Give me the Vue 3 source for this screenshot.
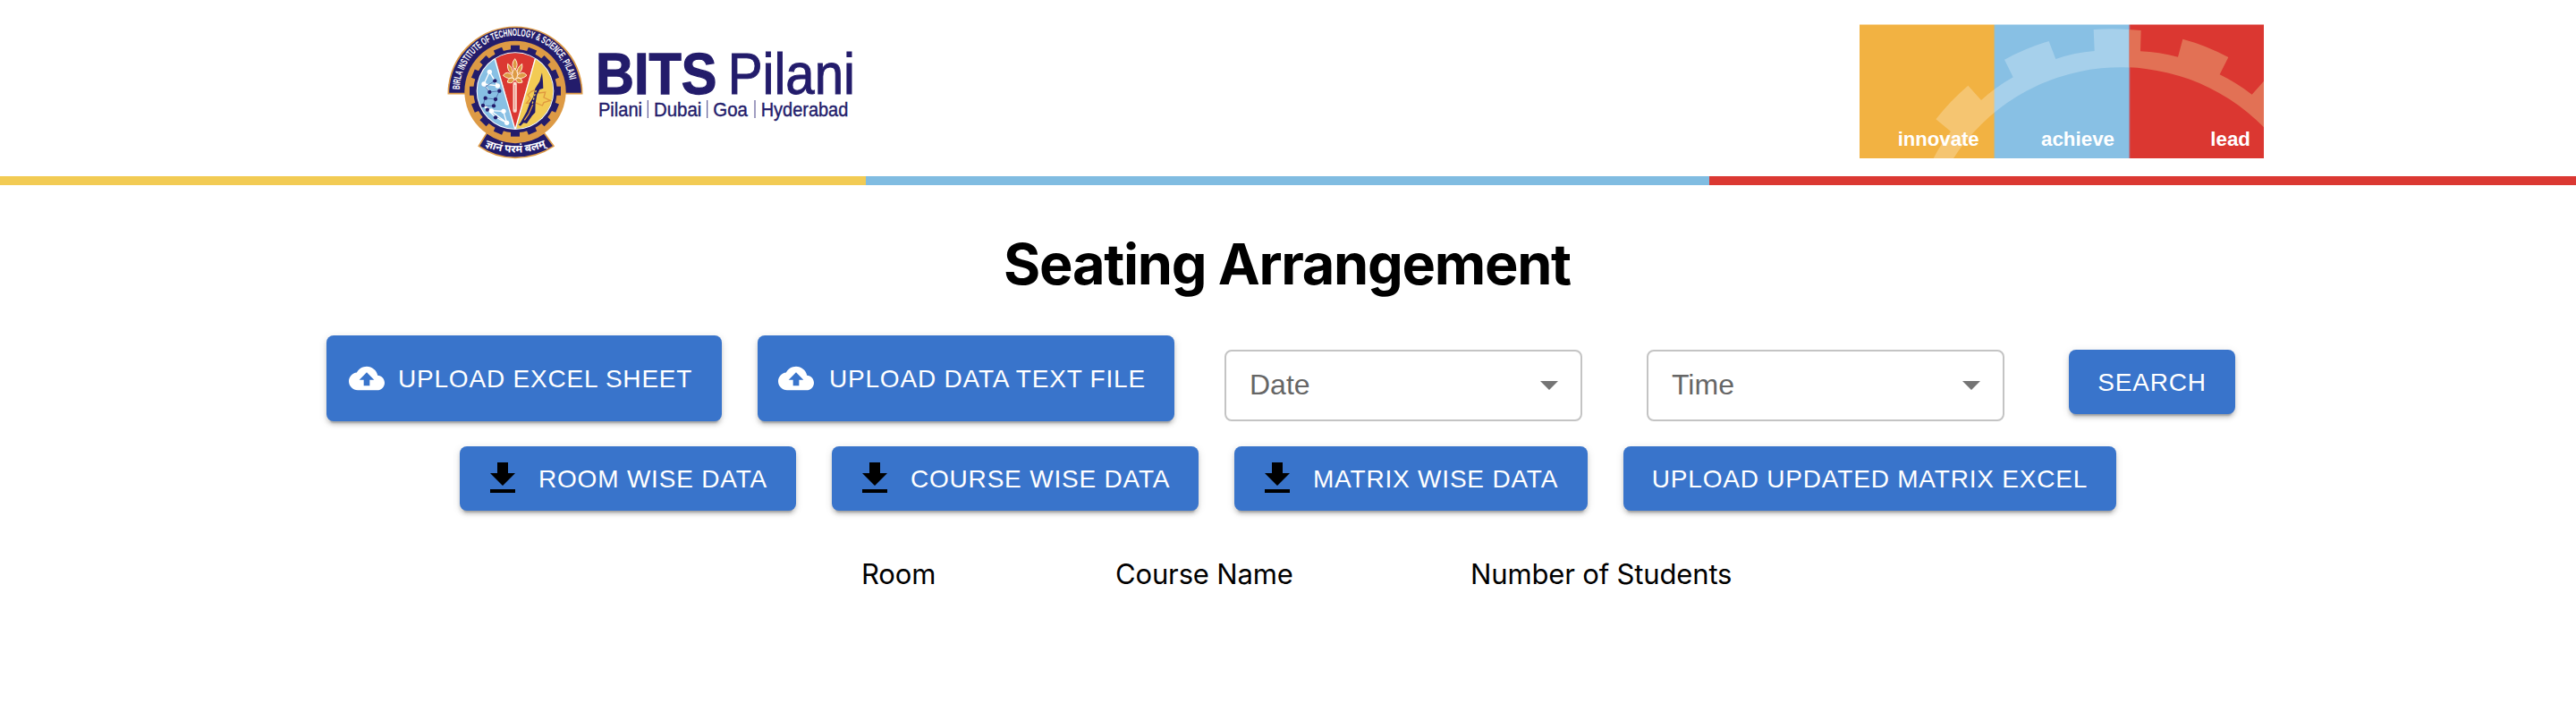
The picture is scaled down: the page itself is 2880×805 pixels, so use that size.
<script setup>
const teeth = Array.from({ length: 16 }, (_, i) => i * 22.5)
const cloud = 'M19.35 10.04C18.67 6.59 15.64 4 12 4 9.11 4 6.6 5.64 5.35 8.04 2.34 8.36 0 10.91 0 14c0 3.31 2.69 6 6 6h13c2.76 0 5-2.24 5-5 0-2.64-2.05-4.78-4.65-4.96zM14 13v4h-4v-4H7l5-5 5 5h-3z'
const download = 'M19 9h-4V3H9v6H5l7 7 7-7zM5 18v2h14v-2H5z'
const uploads = [
  { label: 'Upload Excel Sheet', cls: 'excel' },
  { label: 'Upload Data Text File', cls: 'text-file' },
]
const selects = ['Date', 'Time']
const downloads = [
  { label: 'Room wise data', cls: 'room' },
  { label: 'Course wise data', cls: 'course' },
  { label: 'Matrix wise data', cls: 'matrix' },
]
</script>

<template>
  <div class="page">
    <header class="header">
      <svg class="logo" viewBox="0 0 1440 525">
        <defs>
          <path id="motto-top" d="M71 262A187 187 0 0 1 445 262" />
          <path id="motto-bottom" d="M146 442Q258 492 372 442" />
          <clipPath id="disk"><circle cx="258" cy="260" r="127" /></clipPath>
        </defs>
        <path class="band" d="M34 269C34 258 34 252 36 240A224 224 0 0 1 480 240C482 252 482 258 482 269H424V262H92V269Z" />
        <circle cx="258" cy="262" r="170" class="orange" />
        <circle cx="258" cy="260" r="140" class="navy" />
        <rect v-for="a in teeth" :key="a" x="243" y="107" width="30" height="36" class="navy" :transform="`rotate(${a} 258 260)`" />
        <circle cx="258" cy="260" r="130" fill="#fff" />
        <g clip-path="url(#disk)">
          <rect x="120" y="120" width="280" height="280" fill="#88c0e4" />
          <path d="M258 400L332 120H420V400Z" fill="#f2cb54" />
          <path d="M258 390L184 120H332Z" fill="#db3832" />
          <path d="M184 134L258 390L328 142" fill="none" stroke="#fff" stroke-width="4" />
          <g fill="none" stroke="#fff" stroke-width="4">
            <path d="M172 196L153 237L199 243ZM172 196L190 226M153 237L172 263M218 328L176 326L230 367L192 348M218 328L230 367M192 348L152 310M176 326L156 308" />
          </g>
          <path d="M190 226L158 246L172 264L205 260L192 288L157 284L150 310L186 310L192 288" fill="none" stroke="#5a7bb5" stroke-width="3" />
          <g class="navy">
            <circle v-for="p in [[190,226],[172,264],[205,260],[158,284],[192,288],[150,309],[186,310],[165,323],[192,349]]" :key="p.join()" :cx="p[0]" :cy="p[1]" r="6.5" />
          </g>
          <g fill="#fff">
            <circle v-for="p in [[172,196],[153,237],[199,243],[219,328],[230,367],[178,327]]" :key="p.join()" :cx="p[0]" :cy="p[1]" r="8" />
          </g>
          <path d="M257 236V326" stroke="#f9ddd0" stroke-width="13" stroke-linecap="round" />
          <path d="M257 240V322" stroke="#e9867a" stroke-width="3" />
          <g fill="#dd9a45" stroke="#fff0d0" stroke-width="3">
            <path d="M257 152Q241 172 257 191Q272 172 257 152Z" />
            <path d="M233 169Q229 192 248 203Q254 184 233 169ZM281 169Q285 192 266 203Q260 184 281 169Z" />
            <path d="M217 208Q232 188 251 211Q238 226 217 208ZM297 208Q282 188 263 211Q276 226 297 208Z" />
            <path d="M257 184Q239 205 257 225Q275 205 257 184Z" />
            <path d="M232 231Q234 212 254 218Q253 239 232 231ZM282 231Q280 212 260 218Q261 239 282 231Z" />
          </g>
          <path d="M312 262L330 254L337 267L359 264L354 282L376 292L354 299L349 309L326 300L296 301L309 285L300 273Z" fill="none" stroke="#df983f" stroke-width="4" />
          <path d="M348 199L340 228L325 252L319 280L307 300L296 330L276 366L269 374L276 377L286 367L297 369L315 343L325 332L326 300L331 273L340 255L352 251L351 228Z" class="navy" />
          <path d="M328 258L321 283L315 305" fill="none" stroke="#f2cb54" stroke-width="4" stroke-dasharray="7 6" />
          <path d="M289 358L303 338L317 306" fill="none" stroke="#dd9a45" stroke-width="4" />
        </g>
        <path class="band" d="M163 401Q208 433 258 433Q312 433 355 401L387 445Q329 484 258 484Q191 484 136 445Z" />
        <text class="ring-text" textLength="542" lengthAdjust="spacingAndGlyphs"><textPath href="#motto-top" startOffset="6">BIRLA INSTITUTE OF TECHNOLOGY &amp; SCIENCE, PILANI</textPath></text>
        <text class="hindi"><textPath href="#motto-bottom" startOffset="50%" text-anchor="middle">ज्ञानं परमं बलम्</textPath></text>

        <g class="wordmark">
          <text x="528" y="269" class="bits" textLength="406" lengthAdjust="spacingAndGlyphs">BITS</text>
          <text x="971" y="269" class="pilani" textLength="427" lengthAdjust="spacingAndGlyphs">Pilani</text>
          <g class="campus">
            <text x="537" y="346" textLength="147" lengthAdjust="spacingAndGlyphs">Pilani</text>
            <text x="723" y="346" textLength="160" lengthAdjust="spacingAndGlyphs">Dubai</text>
            <text x="922" y="346" textLength="116" lengthAdjust="spacingAndGlyphs">Goa</text>
            <text x="1082" y="346" textLength="293" lengthAdjust="spacingAndGlyphs">Hyderabad</text>
          </g>
          <path d="M703 291V351M902 291V351M1062 291V351" stroke="#5e5996" stroke-width="3.5" />
        </g>
      </svg>

      <svg class="banner" viewBox="57 37 1356 450" preserveAspectRatio="none">
        <rect x="57" y="37" width="453" height="450" fill="#f2b242" />
        <rect x="509" y="37" width="454" height="450" fill="#88c0e4" />
        <rect x="962" y="37" width="451" height="450" fill="#db3731" />
        <path d="M509.500 37V487" stroke="#b5b99a" stroke-width="2" />
        <path d="M962.500 37V487" stroke="#a87f9b" stroke-width="3" />
        <path d="M57 38.500H1413" stroke="#fff" stroke-opacity=".5" stroke-width="3" />
        <defs>
          <path id="cog" d="M305 487Q330 438 363 397L313 356Q361 294 421 243L465 292Q515 247 572 215L543 156Q615 117 692 94L715 154Q778 132 845 127L842 55Q921 50 1001 58L999 128Q1062 131 1125 147L1141 87Q1220 108 1294 148L1265 206Q1322 234 1373 273L1413 228V383A670 670 0 0 0 372 487Z" />
          <clipPath id="cool"><rect x="57" y="37" width="905" height="450" /></clipPath>
          <clipPath id="warm"><rect x="962" y="37" width="451" height="450" /></clipPath>
        </defs>
        <use href="#cog" clip-path="url(#cool)" fill="#fff" fill-opacity=".25" />
        <use href="#cog" clip-path="url(#warm)" fill="#e27155" />
        <g class="values">
          <text x="185" y="446" textLength="273" lengthAdjust="spacingAndGlyphs">innovate</text>
          <text x="666" y="446" textLength="246" lengthAdjust="spacingAndGlyphs">achieve</text>
          <text x="1234" y="446" textLength="134" lengthAdjust="spacingAndGlyphs">lead</text>
        </g>
      </svg>
    </header>
    <div class="stripe"><i class="s1"></i><i class="s2"></i><i class="s3"></i></div>

    <h1>Seating Arrangement</h1>

    <div class="row first">
      <button v-for="u in uploads" :key="u.cls" class="btn tall" :class="u.cls">
        <svg class="cloud" viewBox="0 0 24 24"><path :d="cloud" /></svg>
        <span>{{ u.label }}</span>
      </button>
      <div v-for="s in selects" :key="s" class="select" :class="s.toLowerCase()">
        <span>{{ s }}</span>
        <svg viewBox="0 0 24 24"><path d="M7 10l5 5 5-5z" /></svg>
      </div>
      <button class="btn search"><span>Search</span></button>
    </div>

    <div class="row second">
      <button v-for="d in downloads" :key="d.cls" class="btn" :class="d.cls">
        <svg class="download" viewBox="0 0 24 24"><path :d="download" /></svg>
        <span>{{ d.label }}</span>
      </button>
      <button class="btn updated"><span>Upload updated matrix excel</span></button>
    </div>

    <div class="table-head">
      <span class="c1">Room</span>
      <span class="c2">Course Name</span>
      <span class="c3">Number of Students</span>
    </div>
  </div>
</template>

<style>
body { background: #fff; }
</style>

<style scoped>
.page { width: 2880px; height: 805px; overflow: hidden; background: #fff; color: #000; font-family: Inter, "Noto Sans", sans-serif; }
.header { height: 197px; box-sizing: border-box; padding: 15px 349px 0 490px; display: flex; justify-content: space-between; align-items: flex-start; }
.logo { width: 480px; height: 175px; display: block; }
.banner { width: 452px; height: 150px; margin-top: 12px; display: block; }
.navy { fill: #231c6b; }
.orange { fill: #dd9a45; }
.band { fill: #231c6b; stroke: #dd9a45; stroke-width: 5; }
.ring-text { font: bold 34px "Liberation Sans", Arial, sans-serif; fill: #fff; }
.hindi { font: bold 36px "Noto Sans", "Noto Sans Devanagari", sans-serif; fill: #fff; }
.wordmark { fill: #231c6b; font-family: "Liberation Sans", Arial, sans-serif; }
.bits { font-size: 194px; font-weight: bold; stroke: #231c6b; stroke-width: 4; }
.pilani { font-size: 194px; stroke: #231c6b; stroke-width: 3; }
.campus { font-size: 64px; stroke: #231c6b; stroke-width: 1.2; }
.values { font: bold 68px "Liberation Sans", Arial, sans-serif; fill: #fff; }
.stripe { display: flex; height: 10px; }
.s1 { width: 968px; background: #f2cb54; }
.s2 { width: 943px; background: #80bce1; }
.s3 { flex: 1; background: #db3832; }
h1 { margin: 0; height: 168px; line-height: 177px; font-size: 63px; font-weight: 700; text-align: center; letter-spacing: -1.3px; padding-right: 2px; white-space: nowrap; }
.row { display: flex; align-items: flex-start; }
.first { height: 124px; padding-left: 365px; }
.second { height: 72px; padding-left: 514px; gap: 40px; }
.btn { flex: none; height: 72px; box-sizing: border-box; margin: 0; border: 0; border-radius: 8px; padding: 0; display: flex; align-items: center; background: #3974cb; color: #fff; font: 28px/49px "Liberation Sans", Arial, sans-serif; letter-spacing: 0.8px; text-transform: uppercase; white-space: nowrap; box-shadow: 0 6px 2px -4px rgba(0,0,0,.2), 0 4px 4px rgba(0,0,0,.14), 0 2px 10px rgba(0,0,0,.12); }
.btn svg { flex: none; }
.tall { height: 96px; }
.cloud { width: 40px; height: 40px; fill: #fff; margin-right: 15px; }
.excel { width: 442px; padding-left: 25px; margin-right: 40px; }
.text-file { width: 466px; padding-left: 23px; margin-right: 56px; }
.text-file .cloud { margin-right: 17px; }
.download { width: 48px; height: 48px; fill: #000; margin-right: 16px; }
.room, .course, .matrix { padding-left: 24px; }
.room { width: 376px; }
.course { width: 410px; }
.matrix { width: 395px; }
.updated { width: 551px; justify-content: center; }
.search { width: 186px; margin-top: 16px; justify-content: center; }
.select { flex: none; width: 400px; height: 80px; margin: 16px 72px 0 0; box-sizing: border-box; border: 2px solid #c4c4c4; border-radius: 8px; padding: 0 11px 2px 26px; display: flex; align-items: center; justify-content: space-between; color: #666; font: 32px/46px "Liberation Sans", Arial, sans-serif; }
.select svg { width: 48px; height: 48px; fill: #757575; }
.table-head { display: flex; padding: 47px 0 0 963px; font-size: 31px; line-height: 48px; letter-spacing: -0.15px; white-space: nowrap; }
.c1 { width: 284px; }
.c2 { width: 397px; }
</style>
